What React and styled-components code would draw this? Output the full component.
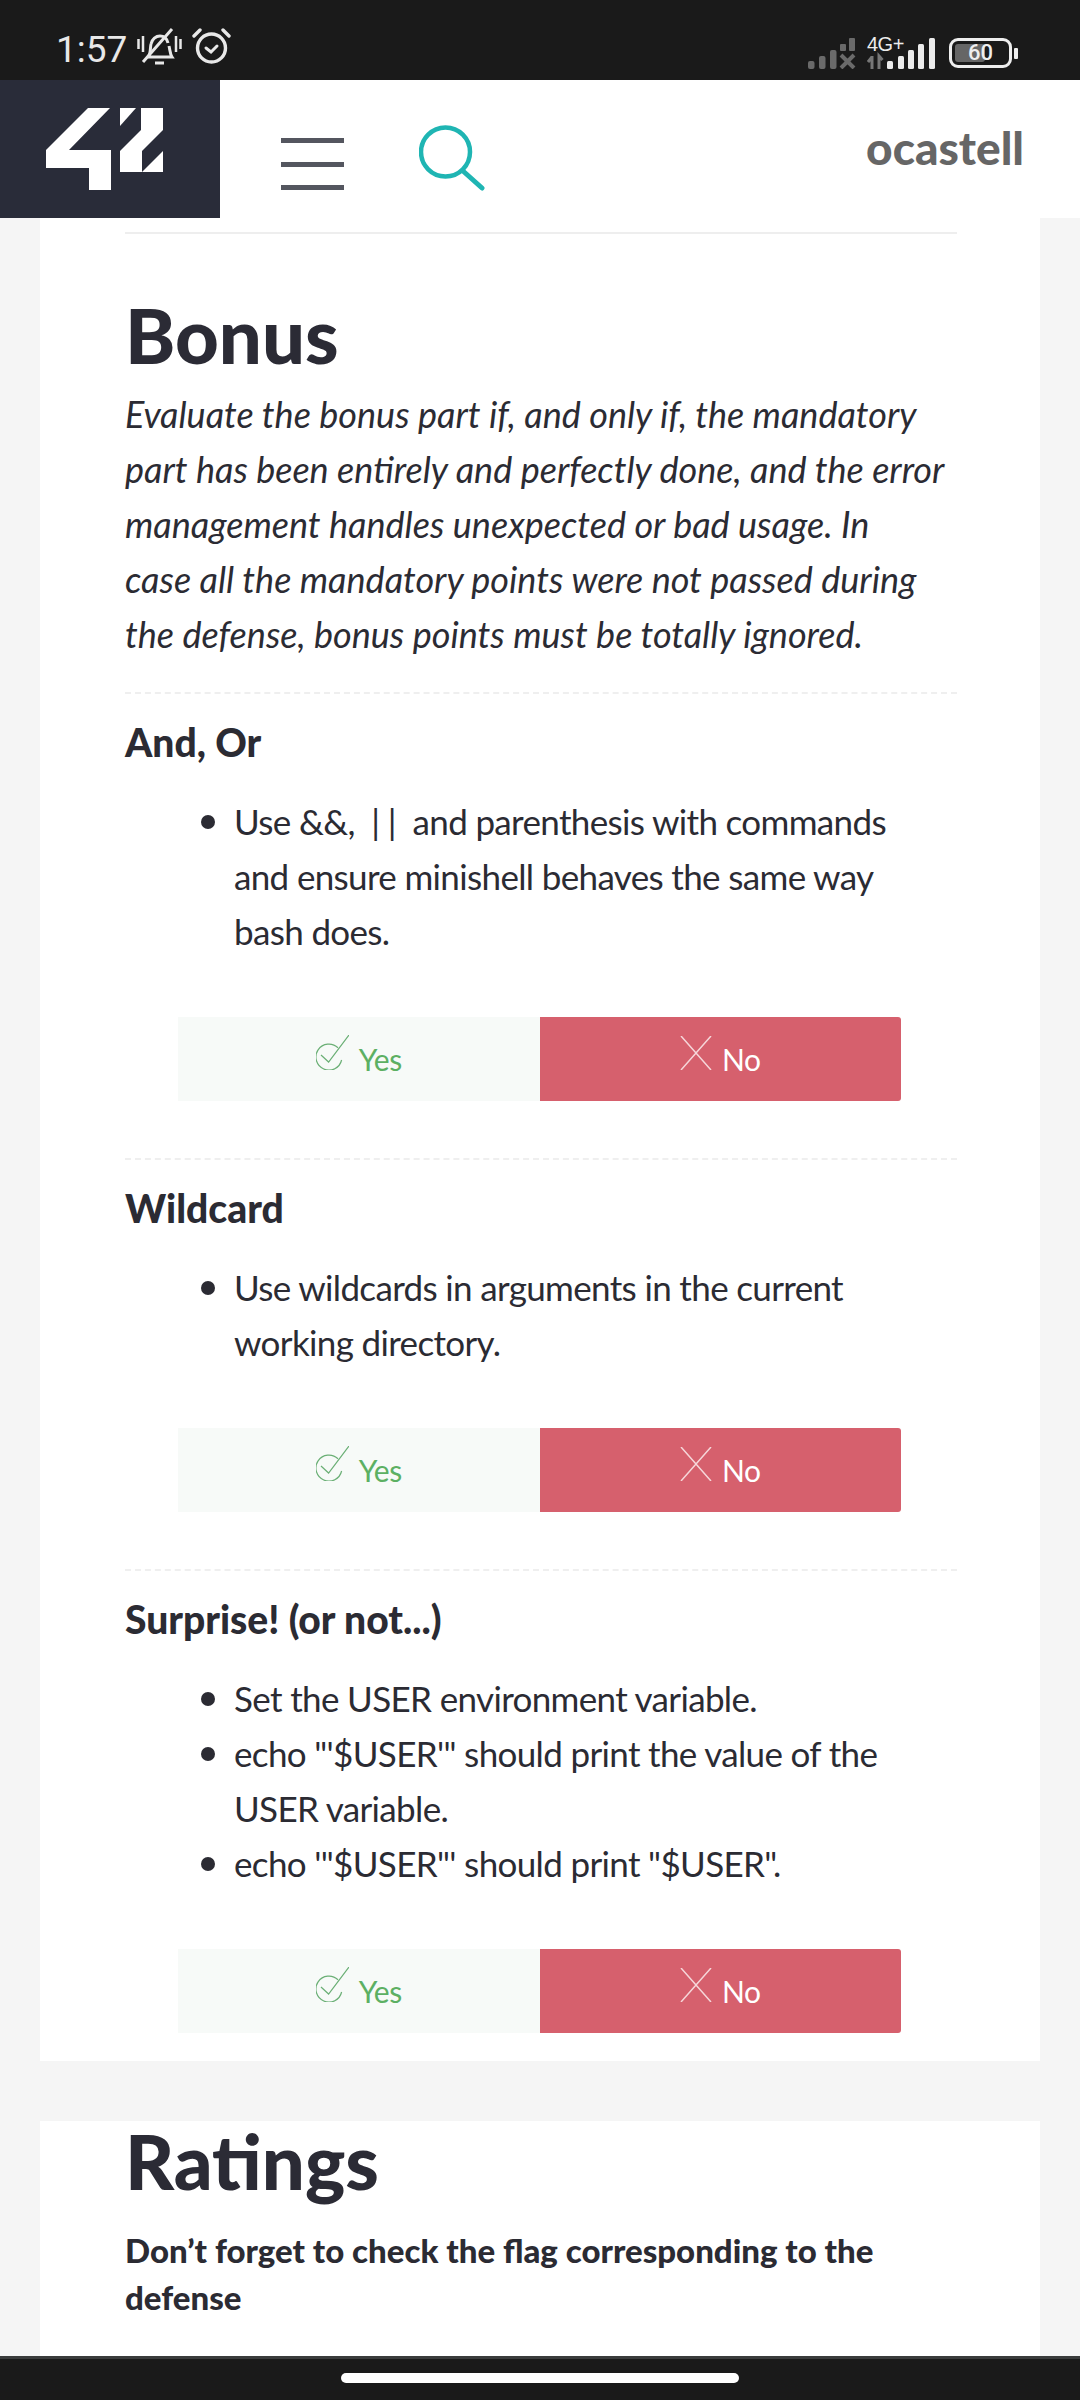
import React from "react";
import styled, { createGlobalStyle } from "styled-components";

const Global = createGlobalStyle`
  html, body { margin: 0; padding: 0; background: #f5f5f5; }
  body { font-family: "Lato", "Liberation Sans", sans-serif; color: #2b2b33; }
  * { box-sizing: border-box; }
`;
const Page = styled.div`
  width: 1080px; height: 2400px; overflow: hidden; display: flex; flex-direction: column; background: #f5f5f5;
`;
const StatusBar = styled.div`
  height: 80px; flex: none; background: #1a1a1a; display: flex; align-items: flex-end; justify-content: space-between;
  padding: 0 62px 11px 56px; color: #eee;
`;
const StatusLeft = styled.div`display: flex; align-items: center; gap: 10px;`;
const StatusRight = styled.div`display: flex; align-items: flex-end; gap: 11px;`;
const Time = styled.span`font-family: Roboto, sans-serif; font-size: 37px; line-height: 38px; color: #e8e8e8; padding-top: 8px;`;
const Header = styled.header`
  height: 138px; flex: none; background: #fff; display: flex; align-items: flex-start;
`;
const Logo = styled.div`
  width: 220px; height: 138px; background: #292c39; padding: 28px 0 0 46px; display: flex; align-items: flex-start;
`;
const Burger = styled.div`
  margin: 58px 0 0 61px; width: 63px; height: 52px; display: flex; flex-direction: column; justify-content: space-between;
  span { height: 5px; background: #54565f; display: block; }
`;
const Search = styled.div`margin: 45px 0 0 75px;`;
const User = styled.div`
  margin-left: auto; padding: 43px 56px 0 0; font-weight: 900; font-size: 46px; line-height: 50px; color: #666;
`;
const Content = styled.main`flex: 1; min-height: 0; display: flex; flex-direction: column; padding: 0 40px;`;
const Card = styled.section`
  background: #fff; padding: 0 83px 0 85px; flex: ${p => (p.$fill ? 1 : "none")};
  & + & { margin-top: 60px; }
`;
const TopRule = styled.div`height: 2px; background: #eee; margin: 14px 0 61px;`;
const H1 = styled.h1`font-size: 76px; line-height: 80px; font-weight: 900; margin: 0; color: #2b2b35;`;
const Lead = styled.p`font-style: italic; font-size: 36px; line-height: 55px; margin: 12px 0 0;`;
const Section = styled.div`
  border-top: 2px dashed #efefef;
  margin-top: ${p => p.$mt}px; padding-top: 24px;
`;
const H3 = styled.h3`font-size: 39px; line-height: 48px; font-weight: 900; margin: 0;`;
const List = styled.ul`
  margin: 28px 0 0; padding: 0 30px 0 109px; font-size: 35px; line-height: 55px; letter-spacing: -0.65px; list-style: none;
`;
const Item = styled.li`
  position: relative;
  &::before {
    content: ""; position: absolute; left: -33px; top: 21px; width: 14px; height: 14px; border-radius: 50%; background: #2b2b33;
  }
`;
const Buttons = styled.div`display: flex; margin: 58px 0 0; padding: 0 56px 0 53px;`;
const Btn = styled.div`
  flex: 1; height: 84px; display: flex; align-items: center; justify-content: center; gap: 10px; font-size: 30px; letter-spacing: -0.5px;
  background: ${p => (p.$no ? "#d6606d" : "#f7faf8")}; color: ${p => (p.$no ? "#fff" : "#5cb063")};
  border-radius: ${p => (p.$no ? "0 3px 3px 0" : "0")};
`;
const BtnIcon = styled.span`display: flex; margin-top: -13px;`;
const BtnLabel = styled.span`margin-top: 0;`;
const CardEnd = styled.div`height: 28px;`;
const Strong = styled.p`font-weight: 900; font-size: 33px; line-height: 47px; margin: 26px 0 0;`;
const NavBar = styled.div`
  flex: none; height: 44px; background: #1a1a1a; border-top: 3px solid #3a3c3c; display: flex; justify-content: center; padding-top: 14px;
`;
const Pill = styled.div`width: 398px; height: 10px; border-radius: 5px; background: #fff;`;

const Logo42 = () => (
  <svg width="117" height="82" viewBox="0 0 117 82" fill="#fff">
    <polygon points="42,0 64,0 23,42 65,42 65,82 43,82 43,60 0,60 0,42" />
    <polygon points="74,0 90,0 74,18" />
    <polygon points="95,0 117,0 117,22 96,43 96,64 74,64 74,43 95,22" />
    <polygon points="117,43 117,64 96,64" />
  </svg>
);
const SearchIcon = () => (
  <svg width="66" height="66" viewBox="0 0 66 66" fill="none" stroke="#1fb5b3" strokeWidth="4.5" strokeLinecap="round">
    <circle cx="26.5" cy="27" r="24.5" />
    <line x1="44" y1="46" x2="63" y2="63" strokeWidth="5" />
  </svg>
);
const BellOff = () => (
  <svg width="45" height="38" viewBox="0 0 45 38" fill="none" stroke="#e8e8e8" strokeWidth="3">
    <path d="M1.5 12v10M6 9v16M43.5 12v10M39 9v16" strokeWidth="2.5" />
    <path d="M11 30c3-3 2-9 3-13 1-5 5-8 9-8s7 3 8 7M32 19c1 4 1 8 3 11H11" />
    <path d="M18 36h9" strokeWidth="3" />
    <path d="M6 35 35 2" />
  </svg>
);
const Alarm = () => (
  <svg width="39" height="36" viewBox="0 0 39 36" fill="none" stroke="#e8e8e8" strokeWidth="3.4" strokeLinecap="round">
    <circle cx="19.5" cy="20" r="14" />
    <path d="M14 20l5 4 6-6" strokeWidth="3" />
    <path d="M2 8 8 2M37 8 31 2" />
  </svg>
);
const bars = [[0, 23, 8], [11, 18, 13], [22, 12, 19]];
const SignalOff = () => (
  <svg width="48" height="31" viewBox="0 0 48 31" fill="#6a6a6a">
    {bars.map(([x, y, h]) => <rect key={x} x={x} y={y} width="6.5" height={h} rx="2" />)}
    <rect x="32" y="6" width="6" height="7" rx="1" />
    <rect x="41" y="0" width="6" height="13" rx="1" />
    <path d="M33 17l13 13M46 17L33 30" stroke="#6a6a6a" strokeWidth="4" fill="none" />
  </svg>
);
const Signal4G = () => (
  <svg width="68" height="31" viewBox="0 0 68 31" fill="#ececec">
    <path d="M5 18v13M1 24l4-5M12 31V18l3.5 4" stroke="#777" strokeWidth="3" fill="none" />
    {[[20, 23, 8], [31, 18, 13], [41, 12, 19], [51, 6, 25], [62, 0, 31]].map(([x, y, h]) => (
      <rect key={x} x={x} y={y} width="6" height={h} rx="1.5" />
    ))}
  </svg>
);
const NetWrap = styled.div`position: relative; display: flex;`;
const NetLabel = styled.span`
  position: absolute; left: 0; top: -3px; font: 20px/18px "Liberation Sans", sans-serif; color: #ececec; letter-spacing: -0.5px;
`;
const BatteryWrap = styled.div`display: flex; align-items: center; gap: 2px; margin-left: 3px; margin-bottom: 1px;`;
const Battery = styled.div`
  position: relative; width: 63px; height: 30px; border: 3px solid #eee; border-radius: 9px;
  display: flex; align-items: center; justify-content: center;
  font: 500 22px/24px Roboto, sans-serif; color: #eee; overflow: hidden;
`;
const BatteryFill = styled.div`position: absolute; left: 3px; top: 3px; bottom: 3px; width: 30px; background: #666; border-radius: 3px;`;
const BatteryNum = styled.span`position: relative;`;
const BatteryTip = styled.div`width: 4px; height: 11px; background: #eee; border-radius: 1px;`;

const CheckIcon = () => (
  <svg width="33" height="35" viewBox="0 0 33 35" fill="none" stroke="#6aaf75" strokeWidth="1.2">
    <path d="M22 12.8A13 13 0 1 0 25.6 25" />
    <path d="M5 20l7.6 7L33 0" />
  </svg>
);
const XIcon = () => (
  <svg width="32" height="34" viewBox="0 0 32 34" fill="none" stroke="#f6d6d9" strokeWidth="1.5">
    <path d="M1 0l30 34M31 0L1 34" />
  </svg>
);
const Answer = () => (
  <Buttons>
    <Btn><BtnIcon><CheckIcon /></BtnIcon><BtnLabel>Yes</BtnLabel></Btn>
    <Btn $no><BtnIcon><XIcon /></BtnIcon><BtnLabel>No</BtnLabel></Btn>
  </Buttons>
);

export default function App() {
  return (
    <Page>
      <Global />
      <StatusBar>
        <StatusLeft><Time>1:57</Time><BellOff /><Alarm /></StatusLeft>
        <StatusRight>
          <SignalOff />
          <NetWrap><NetLabel>4G+</NetLabel><Signal4G /></NetWrap>
          <BatteryWrap><Battery><BatteryFill /><BatteryNum>60</BatteryNum></Battery><BatteryTip /></BatteryWrap>
        </StatusRight>
      </StatusBar>
      <Header>
        <Logo><Logo42 /></Logo>
        <Burger><span /><span /><span /></Burger>
        <Search><SearchIcon /></Search>
        <User>ocastell</User>
      </Header>
      <Content>
        <Card>
          <TopRule />
          <H1>Bonus</H1>
          <Lead>Evaluate the bonus part if, and only if, the mandatory part has been entirely and perfectly done, and the error management handles unexpected or bad usage. In<br />case all the mandatory points were not passed during the defense, bonus points must be totally ignored.</Lead>
          <Section $mt={30}>
            <H3>And, Or</H3>
            <List><Item>{"Use &&,\u00A0 | | \u00A0and parenthesis with commands and ensure minishell behaves the same way bash does."}</Item></List>
            <Answer />
          </Section>
          <Section $mt={57}>
            <H3>Wildcard</H3>
            <List><Item>Use wildcards in arguments in the current working directory.</Item></List>
            <Answer />
          </Section>
          <Section $mt={57}>
            <H3>Surprise! (or not...)</H3>
            <List>
              <Item>Set the USER environment variable.</Item>
              <Item>echo "'$USER'" should print the value of the USER variable.</Item>
              <Item>echo '"$USER"' should print "$USER".</Item>
            </List>
            <Answer />
          </Section>
          <CardEnd />
        </Card>
        <Card $fill>
          <H1>Ratings</H1>
          <Strong>Don’t forget to check the flag corresponding to the defense</Strong>
        </Card>
      </Content>
      <NavBar><Pill /></NavBar>
    </Page>
  );
}
